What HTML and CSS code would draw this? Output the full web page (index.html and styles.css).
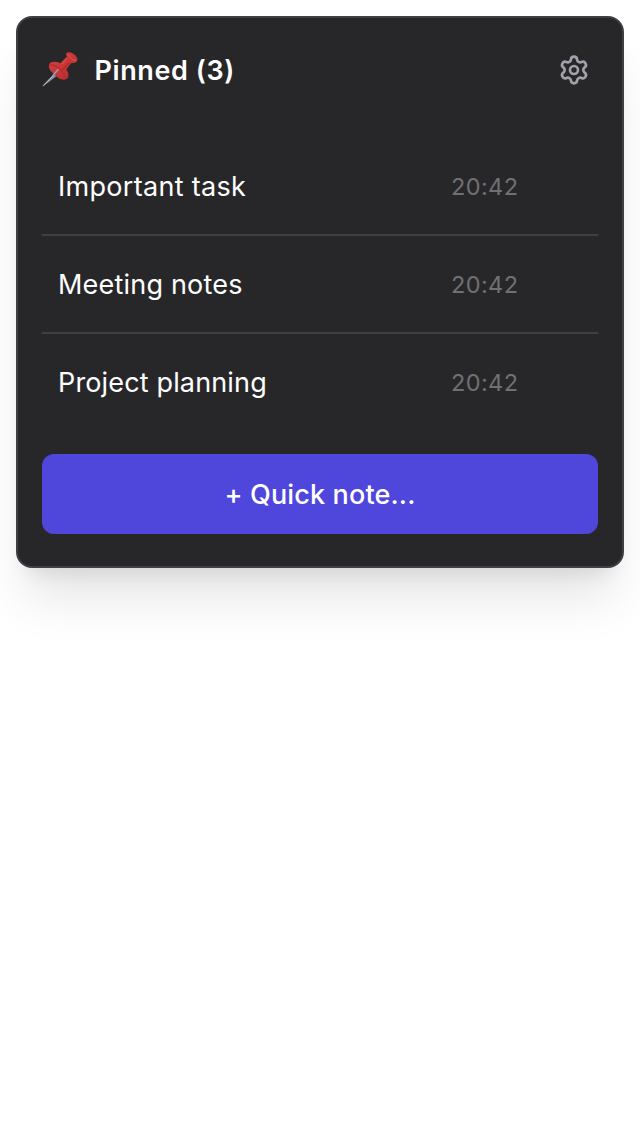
FILE: index.html
```html
<!DOCTYPE html>
<html lang="en">
<head>
<meta charset="utf-8">
<title>Pinned notes</title>
<link rel="stylesheet" href="styles.css">
</head>
<body>
<main class="panel">
  <header class="header">
    <svg class="pin" viewBox="0 0 36 36" aria-hidden="true">
      <defs>
        <linearGradient id="red" x1="0" y1="0" x2="1" y2="1">
          <stop offset="0" stop-color="#d44241"/><stop offset=".55" stop-color="#c93535"/><stop offset="1" stop-color="#b02a2c"/>
        </linearGradient>
      </defs>
      <path d="M13 20.500 16 23 1 34.500 .5 33.800Z" fill="#82919a"/>
      <path d="M12 23 1.500 33.500" stroke="#a9bcc6" stroke-width="1"/>
      <path d="M7.200 12.700C8 9 14 9.500 18.500 11L25 4.500C22.500 1.500 25.500-.8 29.500 .8C34.500 3 37 7.500 34.500 9.800C33 11.300 30 11.200 29.200 11L24.300 17.500C27.500 22 27.200 26.800 23 27.600C19 28.500 14 25 11.500 21.500C8.500 19.500 6.300 16 7.200 12.700Z" fill="url(#red)"/>
      <path d="M8.500 13C13 12.500 21 18 23.500 25.500" fill="none" stroke="#b9292c" stroke-width="1.300"/>
      <path d="M26.500 2.500C28 6 31 8.500 34 8.500M25 6 20 12" fill="none" stroke="#dc5552" stroke-width="1"/>
      <path d="M27 11 20 18" stroke="#ad2a2c" stroke-width="1.300"/>
      <path d="M16.500 17 11 23.500" stroke="#8f9eab" stroke-width="1.600"/>
    </svg>
    <h1 class="title">Pinned (3)</h1>
    <svg class="gear" viewBox="0 0 24 24" fill="none" stroke="currentColor" stroke-width="2" stroke-linecap="round" stroke-linejoin="round" aria-label="Settings">
      <path d="M9.671 4.136a2.34 2.34 0 0 1 4.659 0 2.34 2.34 0 0 0 3.319 1.915 2.34 2.34 0 0 1 2.33 4.033 2.34 2.34 0 0 0 0 3.831 2.34 2.34 0 0 1-2.33 4.033 2.34 2.34 0 0 0-3.319 1.915 2.34 2.34 0 0 1-4.659 0 2.34 2.34 0 0 0-3.32-1.915 2.34 2.34 0 0 1-2.33-4.033 2.34 2.34 0 0 0 0-3.831A2.34 2.34 0 0 1 6.35 6.051a2.34 2.34 0 0 0 3.319-1.915"/>
      <circle cx="12" cy="12" r="3"/>
    </svg>
  </header>
  <ul class="notes">
    <li class="note"><span class="name important">Important task</span><time class="time">20:42</time></li>
    <li class="note"><span class="name meeting">Meeting notes</span><time class="time">20:42</time></li>
    <li class="note"><span class="name project">Project planning</span><time class="time">20:42</time></li>
  </ul>
  <button class="quick"><span class="quick-label">+ Quick note...</span></button>
</main>
</body>
</html>
```
FILE: styles.css
```css
* { box-sizing: border-box; }
body {
  margin: 0;
  min-height: 1144px;
  padding: 16px;
  background: #fff;
  font-family: Inter, "Liberation Sans", sans-serif;
}
.panel {
  height: 552px;
  padding: 24px;
  border: 2px solid #3f3f46;
  border-radius: 16px;
  background: #27272a;
  box-shadow: 0 40px 50px -10px rgba(0, 0, 0, .1), 0 16px 20px -12px rgba(0, 0, 0, .1);
}
.header {
  display: flex;
  align-items: center;
  height: 56px;
  padding-right: 8px;
}
.pin { width: 36px; height: 36px; overflow: visible; }
.title {
  margin: 0 0 0 16.5px;
  padding-top: 1px;
  color: #fff;
  font-size: 27px;
  letter-spacing: .6px;
  line-height: 40px;
  font-weight: 600;
}
.gear { width: 32px; height: 32px; margin-left: auto; color: #a1a1aa; }
.notes { list-style: none; margin: 40px 0 0; padding: 0; }
.note {
  display: flex;
  align-items: center;
  justify-content: space-between;
  height: 98px;
  padding: 2px 80px 0 16px;
  border-bottom: 2px solid #3f3f46;
}
.note:last-child { border-bottom-color: transparent; }
.name { color: #fff; font-size: 27px; line-height: 40px; }
.important { letter-spacing: .3px; }
.meeting { letter-spacing: .2px; }
.project { letter-spacing: .15px; }
.time { color: #6f6f74; font-size: 23.5px; line-height: 32px; letter-spacing: .4px; margin-right: -.4px; }
.quick {
  display: flex;
  align-items: center;
  justify-content: center;
  width: 100%;
  height: 80px;
  margin: 22px 0 0;
  padding: 1px 0 0;
  border: 0;
  border-radius: 12px;
  background: #4f46dc;
  color: #fff;
  font: 500 27px/40px Inter, "Liberation Sans", sans-serif;
  letter-spacing: .15px;
}
```
